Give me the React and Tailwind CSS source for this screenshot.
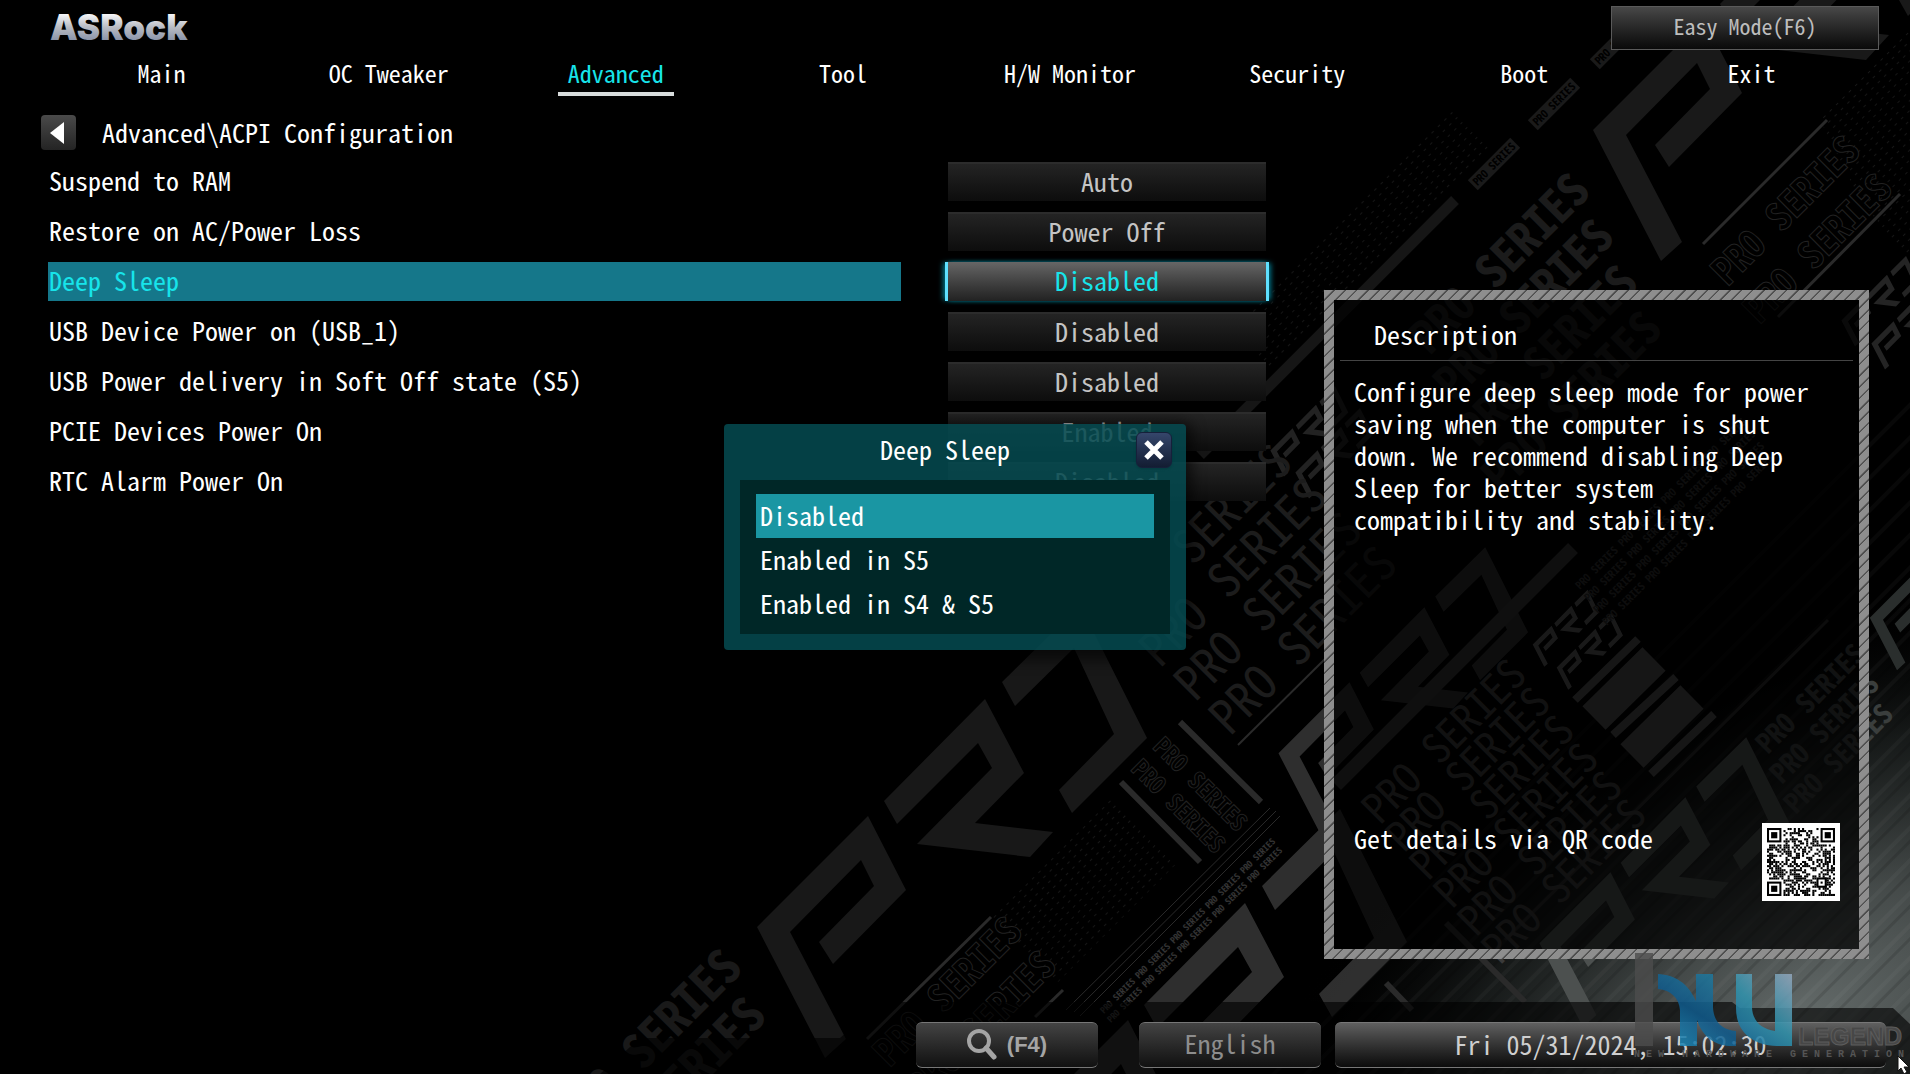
import React, { useState } from "react";

const tabs = [
  "Main",
  "OC Tweaker",
  "Advanced",
  "Tool",
  "H/W Monitor",
  "Security",
  "Boot",
  "Exit",
];

const settings = [
  { name: "Suspend to RAM", value: "Auto" },
  { name: "Restore on AC/Power Loss", value: "Power Off" },
  { name: "Deep Sleep", value: "Disabled" },
  { name: "USB Device Power on (USB_1)", value: "Disabled" },
  { name: "USB Power delivery in Soft Off state (S5)", value: "Disabled" },
  { name: "PCIE Devices Power On", value: "Enabled" },
  { name: "RTC Alarm Power On", value: "Disabled" },
];

const options = ["Disabled", "Enabled in S5", "Enabled in S4 & S5"];

// rotated slogan blocks of the wallpaper
const slogans = [
  { x: 1430, y: 356, size: 46, lines: 4, dx: 24, dy: 46, fill: "#1b1b1b" },
  { x: 1728, y: 287, size: 38, lines: 2, dx: 32, dy: 38, stroke: "#222" },
  { x: 1125, y: 635, size: 48, lines: 4, dx: 35, dy: 34, fill: "#1c1c1c", thin: true },
  { x: 1380, y: 826, size: 42, lines: 6, dx: 24, dy: 28, fill: "#3a3a3a", thin: true },
  { x: 575, y: 1140, size: 48, lines: 2, dx: 24, dy: 48, fill: "#191919" },
  { x: 890, y: 1068, size: 38, lines: 2, dx: 34, dy: 34, stroke: "#222" },
  { x: 1768, y: 755, size: 28, lines: 3, dx: 14, dy: 30, fill: "#3a3e3d" },
  { x: 1104, y: 1014, size: 9, lines: 2, dx: 7, dy: 9, fill: "#333", repeat: 5 },
  { x: 1580, y: 590, size: 11, lines: 4, dx: 9, dy: 12, fill: "#2c2c2c", repeat: 4 },
];

const tags = [
  [1616, 43],
  [1554, 104],
  [1494, 164],
];

const bars = [
  [1575, 700, 1638, 639, 8],
  [1594, 718, 1654, 659, 33],
  [1613, 735, 1676, 677, 8],
  [1632, 756, 1692, 697, 33],
  [1651, 774, 1714, 714, 8],
];

const rules = [
  [1703, 244, 1827, 120, 3],
  [1778, 317, 1900, 194, 3],
  [867, 1039, 991, 917, 3],
  [1035, 1017, 1063, 990, 3],
  [1180, 722, 1261, 802, 6],
  [1121, 782, 1200, 862, 6],
  [1238, 745, 1330, 654, 2],
  [1270, 808, 1066, 1010, 1],
  [1276, 811, 1074, 1012, 1],
  [1280, 816, 1080, 1016, 1],
  [1505, 940, 1828, 620, 3],
  [1446, 923, 1525, 1002, 6],
  [1386, 983, 1412, 1010, 6],
];

function Mark({ transform, fill, opacity = 1 }) {
  return (
    <g transform={transform} fill={fill} opacity={opacity}>
      <polygon points="868,816 906,890 833,964 819,942 874,886 861,860 790,932 846,1039 825,1058 757,927" />
      <polygon points="985,699 1024,773 975,823 1053,832 1030,857 917,844 992,768 978,743 897,824 884,801" />
      <polygon points="1080,605 1147,738 1072,813 1059,790 1114,734 1074,648 1015,706 1002,682" />
    </g>
  );
}

function Wallpaper() {
  return (
    <svg
      className="absolute inset-0 h-full w-full"
      viewBox="0 0 1910 1074"
      preserveAspectRatio="xMaxYMax slice"
      aria-hidden="true"
    >
      <defs>
        <radialGradient
          id="glow"
          gradientUnits="userSpaceOnUse"
          cx="0"
          cy="0"
          r="1"
          gradientTransform="translate(1800 1020) rotate(-30) scale(640 360)"
        >
          <stop offset="0" stopColor="#646b6a" />
          <stop offset="0.3" stopColor="#4c5251" stopOpacity="0.9" />
          <stop offset="0.65" stopColor="#252a29" stopOpacity="0.6" />
          <stop offset="1" stopColor="#000" stopOpacity="0" />
        </radialGradient>
        <pattern
          id="dots"
          width="9"
          height="7"
          patternUnits="userSpaceOnUse"
          patternTransform="rotate(-45)"
        >
          <rect width="3" height="1" fill="#161616" />
        </pattern>
        <pattern
          id="grain"
          width="60"
          height="23"
          patternUnits="userSpaceOnUse"
          patternTransform="rotate(-45)"
        >
          <rect width="60" height="4" y="2" fill="#fff" opacity="0.03" />
          <rect width="60" height="3" y="12" fill="#000" opacity="0.12" />
        </pattern>
      </defs>
      <polygon points="1230,330 1450,110 1490,150 1270,370" fill="url(#dots)" />
      <polygon points="990,920 1110,800 1175,865 1055,985" fill="url(#dots)" />
      <polygon points="1820,120 1910,30 1910,260 1860,200" fill="url(#dots)" />
      <rect width="1910" height="1074" fill="url(#glow)" />
      <polygon points="1910,380 1910,1074 1250,1074" fill="url(#grain)" />

      <Mark fill="#181818" />
      <Mark transform="translate(836 -797)" fill="#191919" />
      <Mark transform="translate(260 204)" fill="#343434" opacity={0.9} />
      <Mark transform="translate(794 160) scale(0.64)" fill="#2e2e2e" />
      <Mark transform="translate(1055 350) scale(0.64)" fill="#4c504f" />
      <Mark transform="translate(1567 247) scale(0.4)" fill="#2a2e2d" />
      <Mark transform="translate(1119 265) scale(0.2)" fill="#222" />
      <Mark transform="translate(1144 287) scale(0.2)" fill="#222" />
      <Mark transform="translate(1404 487) scale(0.17)" fill="#555" />
      <Mark transform="translate(1428 510) scale(0.17)" fill="#555" />
      <Mark transform="translate(1690 135) scale(0.2)" fill="#242424" />
      <Mark transform="translate(1720 158) scale(0.2)" fill="#242424" />

      {bars.map(([x1, y1, x2, y2, w]) => (
        <line key={x1} x1={x1} y1={y1} x2={x2} y2={y2} stroke="#4c4c4c" strokeWidth={w} />
      ))}
      {rules.map(([x1, y1, x2, y2, w]) => (
        <line key={x1} x1={x1} y1={y1} x2={x2} y2={y2} stroke="#2a2a2a" strokeWidth={w} />
      ))}
      <line x1="1200" y1="455" x2="1455" y2="200" stroke="#161616" strokeWidth="11" />
      <line x1="1336" y1="785" x2="1573" y2="548" stroke="#333" strokeWidth="14" />

      <g fontFamily="'Noto Sans Mono CJK SC', 'DejaVu Sans Mono', monospace">
        {slogans.map((s) =>
          Array.from({ length: s.lines }, (_, i) => (
            <text
              key={s.x + "-" + i}
              transform={`translate(${s.x + s.dx * i} ${s.y + s.dy * i}) rotate(-45)`}
              fontSize={s.size}
              fontWeight={s.thin ? 400 : 700}
              fill={s.fill || "none"}
              stroke={s.stroke || "none"}
            >
              {Array(s.repeat || 1).fill("PRO SERIES").join(" ")}
            </text>
          ))
        )}
        {[0, 1].map((i) => (
          <text
            key={i}
            transform={`translate(${1152 - i * 22} ${748 + i * 22}) rotate(45)`}
            fontSize="24"
            fontWeight="700"
            fill="none"
            stroke="#222"
          >
            PRO SERIES
          </text>
        ))}
        {tags.map(([x, y]) => (
          <g key={x} transform={`translate(${x} ${y}) rotate(-45)`}>
            <rect x="-30" y="-7" width="60" height="14" fill="#1a1a1a" />
            <text y="4" fontSize="11" fontWeight="700" textAnchor="middle" fill="#000">
              PRO SERIES
            </text>
          </g>
        ))}
      </g>

      <polygon
        points="600,1074 640,1038 840,1038 880,1002 1732,1002 1740,1008 1893,1008 1910,1024 1910,1074"
        fill="#000"
        opacity="0.62"
      />
    </svg>
  );
}

function Logo() {
  return (
    <svg width="148" height="44" viewBox="0 0 148 44" role="img" aria-label="ASRock">
      <defs>
        <linearGradient id="chrome" x1="0" y1="0" x2="0" y2="1">
          <stop offset="0.2" stopColor="#f4f5f7" />
          <stop offset="0.5" stopColor="#b9bcc4" />
          <stop offset="0.8" stopColor="#8d96aa" />
        </linearGradient>
      </defs>
      <text
        x="2"
        y="40"
        fontFamily="Inter, sans-serif"
        fontSize="35"
        fontWeight="900"
        fill="url(#chrome)"
      >
        ASRock
      </text>
    </svg>
  );
}

const QR = 33;

function isFinder(x, y) {
  return (x < 8 && y < 8) || (x > QR - 9 && y < 8) || (x < 8 && y > QR - 9);
}

function QrCode() {
  const cells = [];
  let seed = 2024;
  for (let y = 0; y < QR; y++) {
    for (let x = 0; x < QR; x++) {
      seed = (seed * 1103515245 + 12345) % 2147483648;
      if (!isFinder(x, y) && seed / 2147483648 > 0.47) {
        cells.push(<rect key={x + "." + y} x={x} y={y} width="1" height="1" />);
      }
    }
  }
  return (
    <svg
      className="h-[78px] w-[78px] shrink-0 bg-white p-[5px]"
      viewBox="0 0 33 33"
      role="img"
      aria-label="QR code"
    >
      {cells}
      {[[0, 0], [26, 0], [0, 26]].map(([x, y]) => (
        <g key={x + "." + y} transform={`translate(${x} ${y})`}>
          <rect x="0.5" y="0.5" width="6" height="6" fill="#fff" stroke="#000" />
          <rect x="2" y="2" width="3" height="3" />
        </g>
      ))}
      <rect x="24" y="24" width="5" height="5" />
      <rect x="25" y="25" width="3" height="3" fill="#fff" />
      <rect x="26" y="26" width="1" height="1" />
    </svg>
  );
}

function Watermark() {
  return (
    <div className="pointer-events-none absolute right-0 bottom-0 h-[124px] w-[280px]">
      <svg width="280" height="124" viewBox="0 0 280 124" aria-hidden="true">
        <defs>
          <linearGradient id="blueN" x1="1" y1="0" x2="0.3" y2="1">
            <stop offset="0" stopColor="#2583a3" />
            <stop offset="0.6" stopColor="#0f5a8c" />
            <stop offset="1" stopColor="#1a86b5" />
          </linearGradient>
          <linearGradient id="blueU" x1="1" y1="0" x2="0.3" y2="1">
            <stop offset="0" stopColor="#93a7bd" />
            <stop offset="0.6" stopColor="#2f93ae" />
            <stop offset="1" stopColor="#1b76a3" />
          </linearGradient>
        </defs>
        <rect x="5" y="3" width="18" height="93" fill="#4c4c4c" opacity="0.8" />
        <path
          d="M28 24C45 25 58 33 66 51V24H83V58C84 72 92 80 106 81V96C86 97 73 88 67 70V96H50V60C49 48 41 40 28 39Z"
          fill="url(#blueN)"
          opacity="0.85"
        />
        <path
          d="M106 24H122V58C123 72 132 79 145 81V24H162V96H147C120 95 106 80 106 58Z"
          fill="url(#blueU)"
          opacity="0.85"
        />
        <text
          x="168"
          y="95"
          fontFamily="'Liberation Sans Narrow', 'Liberation Sans', sans-serif"
          fontSize="25"
          fontWeight="700"
          fill="#474747"
          stroke="#5c5c5c"
        >
          LEGEND
        </text>
        <text
          x="4"
          y="107"
          fontFamily="'Liberation Mono', monospace"
          fontSize="10"
          fontWeight="700"
          fill="#555"
          className="whitespace-pre"
        >
          {"N E W   H A R D W A R E   G E N E R A T I O N"}
        </text>
      </svg>
    </div>
  );
}

function Popup({ selected, onSelect, onClose }) {
  return (
    <div className="absolute inset-0 flex items-center justify-center">
      <div
        role="dialog"
        aria-label="Deep Sleep"
        className="w-[462px] rounded bg-[#04494f]/88 px-4 pb-4 shadow-[0_4px_14px_6px_rgba(0,0,0,0.6)]"
      >
        <div className="flex h-14 items-center">
          <h2 className="flex-1 pb-1.5 pl-3.5 text-center text-[26px] leading-8">Deep Sleep</h2>
          <button
            type="button"
            aria-label="Close"
            onClick={onClose}
            className="-mr-0.5 mb-1 flex h-9 w-9 items-center justify-center rounded-md border border-[#16203a] bg-linear-to-b from-[#35466b] to-[#131d33] shadow"
          >
            <svg width="22" height="22" viewBox="0 0 22 22">
              <path d="M3 3L19 19M19 3L3 19" stroke="#fff" strokeWidth="5" />
            </svg>
          </button>
        </div>
        <ul role="listbox" className="bg-[#002727] px-4 pt-3.5 pb-2">
          {options.map((option) => (
            <li key={option} role="option" aria-selected={option === selected}>
              <button
                type="button"
                onClick={() => onSelect(option)}
                className={
                  option === selected
                    ? "block h-11 w-full bg-[#1a96a3] pb-0.5 pl-1 text-left text-[26px] leading-[42px]"
                    : "block h-11 w-full pb-0.5 pl-1 text-left text-[26px] leading-[42px]"
                }
              >
                {option}
              </button>
            </li>
          ))}
        </ul>
      </div>
    </div>
  );
}

export default function App() {
  const [open, setOpen] = useState(true);
  const [deepSleep, setDeepSleep] = useState("Disabled");

  return (
    <div className="relative flex min-h-screen flex-col overflow-hidden bg-black font-['Noto_Sans_Mono_CJK_SC','DejaVu_Sans_Mono',monospace] text-white">
      <Wallpaper />

      <header className="relative">
        <div className="flex items-start justify-between pl-12 pr-[31px]">
          <Logo />
          <button
            type="button"
            className="mt-1.5 h-[44px] w-[268px] border border-[#5a5a5a] bg-linear-to-b from-[#484848] to-[#0a0a0a] pb-1.5 text-[22px] leading-8 text-[#bdbdbd]"
          >
            Easy Mode(F6)
          </button>
        </div>
        <nav className="mt-1.5 ml-12 mr-[45px] grid grid-cols-8 justify-items-center">
          {tabs.map((tab) => (
            <a
              key={tab}
              href="#"
              className={
                tab === "Advanced"
                  ? "h-10 border-b-4 border-[#d8dcdc] px-2.5 text-[24px] leading-[34px] text-[#17e4ea]"
                  : "h-10 px-2.5 text-[24px] leading-[34px]"
              }
            >
              {tab}
            </a>
          ))}
        </nav>
      </header>

      <main className="relative grid flex-1 grid-cols-[1fr_545px] gap-x-[58px] pl-12 pr-[41px]">
        <section className="pt-[19px]">
          <div className="-ml-[7px] flex items-center gap-[26px]">
            <button
              type="button"
              aria-label="Back"
              className="flex h-[35px] w-[35px] items-center justify-center rounded bg-linear-to-b from-[#4a4a4a] to-[#242424] pr-1"
            >
              <svg width="14" height="22" viewBox="0 0 14 22">
                <polygon points="14,0 14,22 0,11" fill="#fff" />
              </svg>
            </button>
            <h1 className="pb-0.5 text-[26px] leading-[33px]">Advanced\ACPI Configuration</h1>
          </div>
          <div className="mt-3 flex flex-col gap-[11px]">
            {settings.map((s) => (
              <div key={s.name} className="grid grid-cols-[1fr_318px] gap-[47px]">
                <span
                  className={
                    s.name === "Deep Sleep"
                      ? "h-[39px] bg-[#15778a] pl-px text-[26px] leading-[35px] text-[#17e4ea]"
                      : "h-[39px] pl-px text-[26px] leading-[35px]"
                  }
                >
                  {s.name}
                </span>
                <button
                  type="button"
                  aria-label={s.name}
                  onClick={() => s.name === "Deep Sleep" && setOpen(true)}
                  className={
                    s.name === "Deep Sleep"
                      ? "-mx-[3px] h-[39px] border-x-[3px] border-[#5fe0ff] bg-linear-to-b from-[#666] to-[#222] pb-1 text-[26px] leading-[35px] text-[#17e4ea] shadow-[-3px_0_5px_-1px_rgba(0,190,220,0.6),3px_0_5px_-1px_rgba(0,190,220,0.6)]"
                      : "h-[39px] border-t-2 border-[#2c2c2c] bg-linear-to-b from-[#242424] to-[#0d0d0d] pb-1 text-[26px] leading-[33px] text-[#c4c4c4]"
                  }
                >
                  {s.name === "Deep Sleep" ? deepSleep : s.value}
                </button>
              </div>
            ))}
          </div>
        </section>

        <aside className="mt-[194px] mb-[63px] border-[10px] [border-image:repeating-linear-gradient(135deg,#8e8e8e_0px,#8e8e8e_6px,#4e4e4e_7px,#4e4e4e_8px)_10]">
          <div className="flex h-full flex-col bg-black/70">
            <h2 className="mx-1.5 border-b border-[#444] pt-[18px] pb-2.5 pl-[34px] text-[26px] leading-8">
              Description
            </h2>
            <p className="mt-3.5 pl-5 pr-[30px] text-[26px] leading-8">
              Configure deep sleep mode for power saving when the computer is shut down. We
              recommend disabling Deep Sleep for better system compatibility and stability.
            </p>
            <div className="mt-auto mb-12 flex items-start justify-between pl-5 pr-[19px]">
              <p className="text-[26px] leading-[30px]">Get details via QR code</p>
              <QrCode />
            </div>
          </div>
        </aside>
      </main>

      <footer className="relative flex justify-end pr-6 pb-1.5">
        <button
          type="button"
          className="mr-[41px] flex h-[46px] w-[182px] items-center justify-center gap-2.5 rounded-md border-y border-[#777] bg-linear-to-b from-[#444] to-[#111] pb-0.5 font-['Liberation_Sans',sans-serif] text-[22px] font-bold text-[#a5a5a5]"
        >
          <svg width="30" height="32" viewBox="0 0 30 32" fill="none" stroke="#a5a5a5">
            <circle cx="12" cy="13" r="10" strokeWidth="4" />
            <path d="M19 20L27 29" strokeWidth="5" strokeLinecap="round" />
          </svg>
          (F4)
        </button>
        <button
          type="button"
          className="mr-[14px] h-[46px] w-[182px] rounded-md border-y border-[#777] bg-linear-to-b from-[#444] to-[#111] pb-1 text-[26px] leading-10 text-[#8d8d8d]"
        >
          English
        </button>
        <div className="h-[46px] w-[551px] rounded-md border-y border-[#777] bg-linear-to-b from-[#606060] to-[#0c0c0c] text-center text-[26px] leading-[41px] text-[#cfcfcf]">
          Fri 05/31/2024, 15:02:30
        </div>
      </footer>

      {open && (
        <Popup
          selected={deepSleep}
          onSelect={setDeepSleep}
          onClose={() => setOpen(false)}
        />
      )}
      <Watermark />
      <svg
        className="pointer-events-none absolute right-0 bottom-0"
        width="14"
        height="19"
        viewBox="0 0 14 19"
      >
        <path d="M2 1V16L5 13L8 19L11 17L8 12H13Z" fill="#fff" stroke="#111" />
      </svg>
    </div>
  );
}
